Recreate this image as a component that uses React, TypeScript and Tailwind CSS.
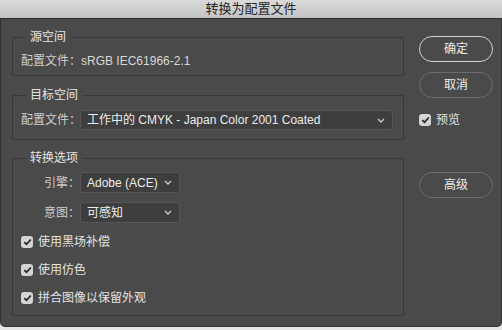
const font = "font-['Liberation_Sans','Noto_Sans_CJK_SC',sans-serif]";

function Chevron() {
  return (
    <svg width="8" height="5" viewBox="0 0 8 5" className="shrink-0">
      <path d="M1 1 L4 4 L7 1" fill="none" stroke="#cfcfcf" strokeWidth="1.3" />
    </svg>
  );
}

function Check({ label }: { label: string }) {
  return (
    <div className="flex h-[16px] items-center gap-[5px]">
      <span className="flex h-[12px] w-[12px] shrink-0 items-center justify-center rounded-[3px] bg-[#d4d4d4]">
        <svg width="9" height="8" viewBox="0 0 9 8">
          <path d="M1.3 4.2 L3.5 6.3 L7.8 1.5" fill="none" stroke="#262626" strokeWidth="1.8" />
        </svg>
      </span>
      <span className="whitespace-nowrap text-[12px] leading-[16px] text-[#e2e2e2]">{label}</span>
    </div>
  );
}

function Select({ value, className }: { value: string; className: string }) {
  return (
    <div
      className={`flex items-center justify-between rounded-[3px] border border-[#575757] bg-[#3e3e3e] pl-[6px] pr-[7px] ${className}`}
    >
      <span className="whitespace-nowrap text-[12px] leading-[16px] text-[#ececec]">{value}</span>
      <Chevron />
    </div>
  );
}

function Group({ title, className, children }: { title: string; className: string; children: React.ReactNode }) {
  return (
    <fieldset className={`rounded-[2px] border border-[#383838] px-[8px] ${className}`}>
      <legend className="ml-[5px] px-[4px] text-[12px] leading-[16px] text-[#e4e4e4]">{title}</legend>
      {children}
    </fieldset>
  );
}

function Button({ label, strong }: { label: string; strong?: boolean }) {
  return (
    <button
      type="button"
      className={`h-[26px] w-[74px] rounded-full border text-[12px] leading-[16px] text-[#ececec] ${
        strong ? "border-[#d2d2d2]" : "border-[#6c6c6c]"
      }`}
    >
      {label}
    </button>
  );
}

export default function App() {
  return (
    <div className={`h-[330px] w-[502px] bg-[#e6e6e6] ${font}`}>
      <div className="flex h-[19px] items-center justify-center border-b border-[#2c2c2c] bg-gradient-to-b from-[#dadada] to-[#c4c4c4] text-[13px] leading-[16px] text-[#262626]">
        转换为配置文件
      </div>
      <div className="flex h-[308px] rounded-b-[5px] border-x border-b border-[#333] bg-[#4a4a4a]">
        <div className="ml-[11px] flex w-[392px] shrink-0 flex-col pt-[10px]">
          <Group title="源空间" className="pb-[6px]">
            <div className="whitespace-nowrap pt-[8px] text-[12px] leading-[16px] text-[#cfcfcf]">
              配置文件：<span className="text-[#d8d8d8]">sRGB IEC61966-2.1</span>
            </div>
          </Group>

          <Group title="目标空间" className="mt-[11px] pb-[9px] pr-[10px]">
            <div className="flex items-center pt-[7px]">
              <span className="w-[59px] shrink-0 whitespace-nowrap text-[12px] leading-[16px] text-[#cfcfcf]">配置文件：</span>
              <Select value="工作中的 CMYK - Japan Color 2001 Coated" className="h-[20px] flex-1" />
            </div>
          </Group>

          <Group title="转换选项" className="mt-[10px] pb-[9px]">
            <div className="flex flex-col pt-[6px]">
              <div className="flex items-center">
                <span className="w-[59px] shrink-0 whitespace-nowrap text-right text-[12px] leading-[16px] text-[#cfcfcf]">引擎：</span>
                <Select value="Adobe (ACE)" className="h-[21px] w-[100px]" />
              </div>
              <div className="mt-[9px] flex items-center">
                <span className="w-[59px] shrink-0 whitespace-nowrap text-right text-[12px] leading-[16px] text-[#cfcfcf]">意图：</span>
                <Select value="可感知" className="h-[21px] w-[100px]" />
              </div>
              <div className="mt-[11px] flex flex-col gap-[12px]">
                <Check label="使用黑场补偿" />
                <Check label="使用仿色" />
                <Check label="拼合图像以保留外观" />
              </div>
            </div>
          </Group>
        </div>

        <div className="ml-[15px] flex flex-col pt-[17px]">
          <Button label="确定" strong />
          <div className="mt-[10px]">
            <Button label="取消" />
          </div>
          <div className="mt-[14px]">
            <Check label="预览" />
          </div>
          <div className="mt-[44px]">
            <Button label="高级" />
          </div>
        </div>
      </div>
    </div>
  );
}
